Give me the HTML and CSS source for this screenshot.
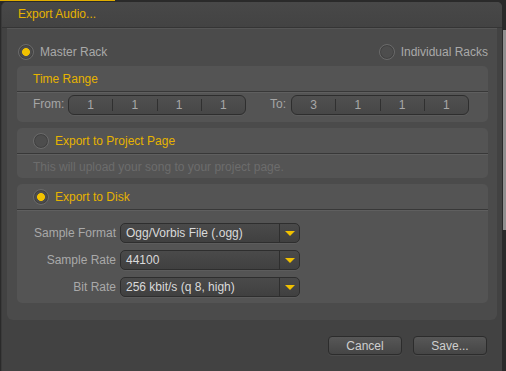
FILE: index.html
```html
<!DOCTYPE html>
<html lang="en">
<head>
    <meta charset="UTF-8">
    <link rel="stylesheet" href="styles.css">
    <title>Export Audio...</title>
</head>
<body>
    <section class="dialog">

        <div class="titlebar">Export Audio...</div>

        <div class="panel">

            <div class="rack-row">
                <label class="radio checked">Master Rack</label>
                <label class="radio">Individual Racks</label>
            </div>

            <div class="card">
                <div class="card-head">Time Range</div>
                <div class="card-body range-row">
                    <span class="range-label">From:</span>
                    <div class="timebox">
                        <span>1</span><span>1</span><span>1</span><span>1</span>
                    </div>
                    <span class="range-label to">To:</span>
                    <div class="timebox">
                        <span>3</span><span>1</span><span>1</span><span>1</span>
                    </div>
                </div>
            </div>

            <div class="card">
                <div class="card-head"><label class="radio head-radio">Export to Project Page</label></div>
                <div class="card-body note">This will upload your song to your project page.</div>
            </div>

            <div class="card">
                <div class="card-head"><label class="radio checked head-radio">Export to Disk</label></div>
                <div class="card-body disk-rows">
                    <div class="field">
                        <span class="field-label">Sample Format</span>
                        <div class="combo"><span class="combo-text">Ogg/Vorbis File (.ogg)</span><span class="combo-arrow"></span></div>
                    </div>
                    <div class="field">
                        <span class="field-label">Sample Rate</span>
                        <div class="combo"><span class="combo-text">44100</span><span class="combo-arrow"></span></div>
                    </div>
                    <div class="field">
                        <span class="field-label">Bit Rate</span>
                        <div class="combo"><span class="combo-text">256 kbit/s (q 8, high)</span><span class="combo-arrow"></span></div>
                    </div>
                </div>
            </div>

        </div>

        <div class="footer">
            <button class="btn">Cancel</button>
            <button class="btn">Save...</button>
        </div>

    </section>
</body>
</html>
```

FILE: styles.css
```css
* {
    box-sizing: border-box;
    font-family: "Liberation Sans", Arial, sans-serif;
}

html, body {
    margin: 0;
    padding: 0;
    width: 506px;
    height: 371px;
    overflow: hidden;
}

body {
    font-size: 12px;
    background:
        linear-gradient(#e0ad00, #e0ad00) 0 0 / 115px 1px no-repeat,
        linear-gradient(90deg, transparent 503px, #8f8f8f 503px) 0 30px / 506px 200px no-repeat,
        #2a2a2a;
}

.dialog {
    width: 501px;
    height: 369px;
    margin: 2px 0 0 1px;

    display: flex;
    flex-direction: column;

    background-color: #424242;
    border-radius: 5px 5px 0 0;
    border-left: 1px solid #3a3a3a;
}

.titlebar {
    height: 26px;
    padding-left: 16px;

    line-height: 25px;
    color: #e6b300;

    background: linear-gradient(#484848, #434343);
    border-radius: 5px 5px 0 0;
    border-bottom: 1px solid #353535;
}

.panel {
    height: 292px;
    margin: 0 5px 0 5px;
    padding: 0 9px 0 10px;

    display: flex;
    flex-direction: column;
    gap: 6px;

    background-color: #4b4b4b;
    border-top: 1px solid #565656;
    border-radius: 0 0 6px 6px;
}

/*

    RADIOS

*/

.radio {
    display: flex;
    align-items: center;
    gap: 6px;

    color: #a9a9a9;
}

.radio::before {
    content: "";
    width: 14px;
    height: 14px;

    border-radius: 50%;
    border: 1px solid #6a6a6a;
    box-shadow: inset 0 0 0 1px #414141;

    background: #4d4d4d;
}

.radio.checked::before {
    background: radial-gradient(circle, #f2c200 0, #f2c200 3.6px, #4d4d4d 4.3px);
}

.rack-row {
    height: 17px;
    margin-top: 14px;

    display: flex;
    justify-content: space-between;
    align-items: center;
    padding-left: 1px;
}

.head-radio {
    color: #e6b300;
}

/*

    CARDS

*/

.card {
    background-color: #545454;
    border-radius: 5px;
}

.card-head {
    height: 26px;
    padding-left: 16px;

    display: flex;
    align-items: center;

    color: #e6b300;

    border-bottom: 1px solid #383838;
}

.card-body {
    border-top: 1px solid #5f5f5f;
}

.range-row {
    height: 30px;
    padding: 2px 0 0 16px;

    display: flex;
    align-items: flex-start;
}

.range-label {
    width: 35px;
    line-height: 19px;
    color: #a6a6a6;
}

.range-label.to {
    width: 21px;
    margin-left: 24px;
}

.timebox {
    width: 178px;
    height: 20px;

    display: flex;
    align-items: center;

    border: 1px solid #2e2e2e;
    border-radius: 6px;
    background: linear-gradient(#505050, #474747);
    box-shadow: 0 1px 0 #5c5c5c;
}

.timebox span {
    flex: 1;
    text-align: center;
    color: #a8a8a8;
    line-height: 12px;
}

.timebox span + span {
    border-left: 1px solid #303030;
}

.note {
    height: 24px;
    padding-left: 16px;

    display: flex;
    align-items: center;

    color: #6c6c6c;
}

.disk-rows {
    padding: 12px 0 6px 0;

    display: flex;
    flex-direction: column;
    gap: 7px;
}

.field {
    display: flex;
    align-items: center;
    gap: 4px;
}

.field-label {
    width: 99px;
    text-align: right;
    color: #a9a9a9;
}

.combo {
    width: 180px;
    height: 20px;

    display: flex;

    border: 1px solid #2e2e2e;
    border-radius: 5px;
    background: linear-gradient(#4a4a4a, #404040);
    box-shadow: 0 1px 0 #5c5c5c;
}

.combo-text {
    flex: 1;
    padding-left: 5px;

    line-height: 18px;
    color: #dadada;
}

.combo-arrow {
    width: 20px;
    position: relative;
    border-left: 1px solid #2e2e2e;
}

.combo-arrow::after {
    content: "";
    position: absolute;
    left: 5px;
    top: 7px;

    border-left: 5px solid transparent;
    border-right: 5px solid transparent;
    border-top: 5px solid #f0c000;
}

/*

    FOOTER

*/

.footer {
    flex: 1;
    padding: 16px 15px 0 0;

    display: flex;
    justify-content: flex-end;
    align-items: flex-start;
    gap: 11px;
}

.btn {
    width: 74px;
    height: 19px;

    font-size: 12px;
    color: #cfcfcf;

    border: 1px solid #2c2c2c;
    border-radius: 4px;
    background: linear-gradient(#575757, #454545);
    box-shadow: 0 1px 0 #4c4c4c;
}
```
